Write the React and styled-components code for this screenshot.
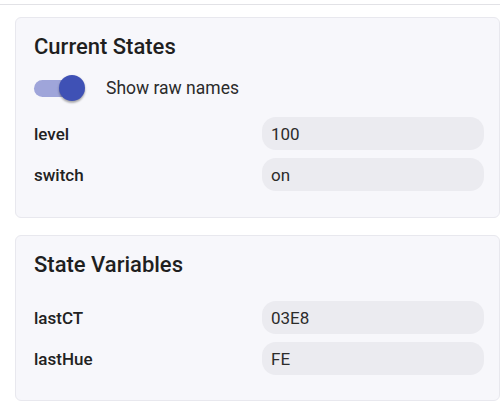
import React, { useState } from 'react';
import styled, { createGlobalStyle } from 'styled-components';

const GlobalStyle = createGlobalStyle`
  body {
    margin: 0;
    background: #ffffff;
    font-family: Roboto, "Noto Sans", Arial, sans-serif;
    color: #222;
  }
`;

const Page = styled.div`
  width: 500px;
`;

const TopRule = styled.div`
  height: 4px;
  border-bottom: 1px solid #e2e2e6;
`;

const Cards = styled.div`
  display: flex;
  flex-direction: column;
  gap: 17px;
  margin: 12px 0 0 15px;
`;

const Card = styled.section`
  background: #f7f7fb;
  border: 1px solid #e8e8ee;
  border-radius: 6px;
  padding: 16px 15px ${p => p.$bottom}px 18px;
`;

const Title = styled.h2`
  margin: 0;
  font-size: 22px;
  line-height: 26px;
  font-weight: 500;
  color: #1f1f1f;
`;

const ToggleRow = styled.label`
  display: flex;
  align-items: center;
  height: 32px;
  margin-top: 13px;
  cursor: pointer;
`;

const SwitchBox = styled.span`
  position: relative;
  width: 60px;
  height: 32px;
  flex: none;
`;

const Track = styled.span`
  position: absolute;
  left: 0;
  top: 7px;
  width: 44px;
  height: 17px;
  border-radius: 9px;
  background: ${p => (p.$on ? '#9fa5da' : '#c4c4c8')};
`;

const Thumb = styled.span`
  position: absolute;
  top: 2px;
  left: ${p => (p.$on ? '25px' : '0px')};
  width: 26px;
  height: 26px;
  border-radius: 50%;
  background: ${p => (p.$on ? '#3f51b5' : '#fafafa')};
  box-shadow: 0 2px 2px rgba(0, 0, 0, 0.24), 0 1px 3px rgba(0, 0, 0, 0.14);
`;

const ToggleText = styled.span`
  margin-left: 12px;
  margin-top: -2px;
  font-size: 17.5px;
  color: #2b2b2b;
`;

const Grid = styled.div`
  display: grid;
  grid-template-columns: 1fr 1fr;
  column-gap: 6px;
  row-gap: 8px;
  margin-top: ${p => p.$top}px;
`;

const Label = styled.div`
  display: flex;
  align-items: center;
  font-size: 17px;
  font-weight: 500;
  color: #222;
`;

const Value = styled.div`
  display: flex;
  align-items: center;
  height: 33px;
  padding: 0 9px;
  border-radius: 14px;
  background: #ebebf0;
  font-size: 17px;
  color: #2b2b2b;
`;

const Rows = ({ items, top }) => (
  <Grid $top={top}>
    {items.map(([k, v]) => (
      <React.Fragment key={k}>
        <Label>{k}</Label>
        <Value>{v}</Value>
      </React.Fragment>
    ))}
  </Grid>
);

export default function App() {
  const [raw, setRaw] = useState(true);
  return (
    <Page>
      <GlobalStyle />
      <TopRule />
      <Cards>
        <Card $bottom={26}>
          <Title>Current States</Title>
          <ToggleRow onClick={() => setRaw(!raw)}>
            <SwitchBox>
              <Track $on={raw} />
              <Thumb $on={raw} />
            </SwitchBox>
            <ToggleText>Show raw names</ToggleText>
          </ToggleRow>
          <Rows top={12} items={[['level', '100'], ['switch', 'on']]} />
        </Card>
        <Card $bottom={25}>
          <Title>State Variables</Title>
          <Rows top={23} items={[['lastCT', '03E8'], ['lastHue', 'FE']]} />
        </Card>
      </Cards>
    </Page>
  );
}
